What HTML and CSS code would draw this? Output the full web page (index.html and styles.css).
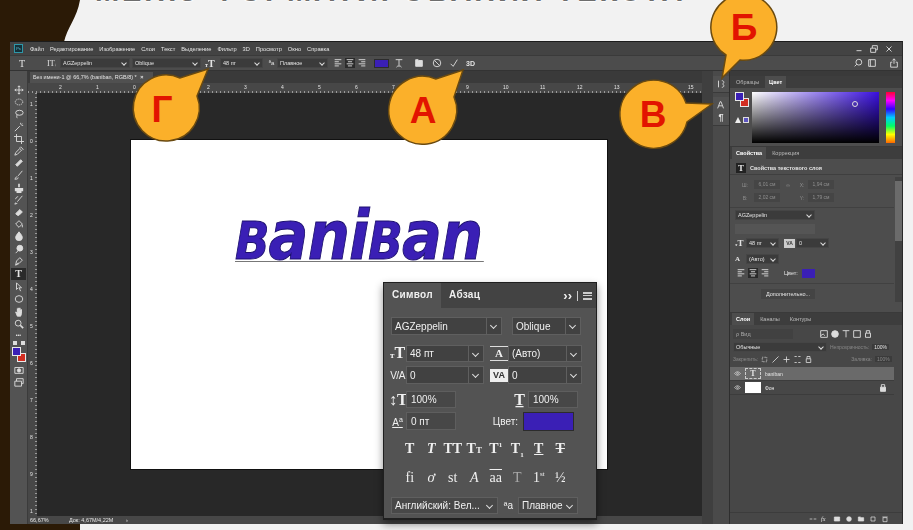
FILE: index.html
```html
<!DOCTYPE html>
<html lang="ru">
<head>
    <meta charset="UTF-8">
    <title>Меню форматирования текста</title>
    <link rel="stylesheet" href="styles.css">
</head>
<body>
<div class="slide">
    <svg class="backdrop" viewBox="0 0 913 530"><path d="M0 0H80C77 18 67 28 64 42V524H80V530H0Z"/></svg>

    <div class="title-strip"><h1 class="title">МЕНЮ ФОРМАТИРОВАНИЯ ТЕКСТА</h1></div>

    <div class="window">
        <div class="menubar">
            <span class="ps-logo">Ps</span>
            <span>Файл</span><span>Редактирование</span><span>Изображение</span><span>Слои</span><span>Текст</span><span>Выделение</span><span>Фильтр</span><span>3D</span><span>Просмотр</span><span>Окно</span><span>Справка</span>
            <div class="win-btns">
                <svg class="ic" viewBox="0 0 12 12"><path d="M3 8h6"/></svg>
                <svg class="ic" viewBox="0 0 12 12"><path d="M2 5h6v5H2zM4 5V2h6v5H8"/></svg>
                <svg class="ic" viewBox="0 0 12 12"><path d="M3 3l6 6M9 3l-6 6"/></svg>
            </div>
        </div>

        <div class="optbar">
            <span class="opt-t">T</span>
            <span class="opt-tt">IT<small>↓</small></span>
            <div class="sel sel-dark w70"><span>AGZeppelin</span></div>
            <div class="sel sel-dark w69"><span>Oblique</span></div>
            <span class="opt-size"><small>т</small>T</span>
            <div class="sel sel-dark w43"><span>48 пт</span></div>
            <span class="opt-aa">ªa</span>
            <div class="sel sel-dark w51"><span>Плавное</span></div>
            <div class="align-group">
                <svg class="ic" viewBox="0 0 12 12"><path d="M2 2h8M2 4.500h5M2 7h8M2 9.500h5"/></svg>
                <svg class="ic ic-on" viewBox="0 0 12 12"><path d="M2 2h8M3.500 4.500h5M2 7h8M3.500 9.500h5"/></svg>
                <svg class="ic" viewBox="0 0 12 12"><path d="M2 2h8M5 4.500h5M2 7h8M5 9.500h5"/></svg>
            </div>
            <span class="opt-swatch"></span>
            <svg class="ic opt-warp" viewBox="0 0 12 12"><path d="M2 2h8M6 2v7M3 11c1-2 5-2 6 0"/></svg>
            <svg class="ic opt-panel" viewBox="0 0 12 12"><path d="M2 2h3l1 1h4v7H2z" fill="#ddd"/></svg>
            <svg class="ic opt-cancel" viewBox="0 0 12 12"><circle cx="6" cy="6" r="4.500"/><path d="M3 3l6 6"/></svg>
            <svg class="ic opt-ok" viewBox="0 0 12 12"><path d="M2 7l3 3 5-8"/></svg>
            <span class="opt-3d">3D</span>
            <div class="opt-right">
                <svg class="ic" viewBox="0 0 12 12"><circle cx="7" cy="5" r="3.500"/><path d="M4.500 7.500L2 10"/></svg>
                <svg class="ic" viewBox="0 0 12 12"><path d="M2 2h8v8H2zM4 2v8"/></svg>
                <svg class="ic opt-share" viewBox="0 0 12 12"><path d="M4 5H2v6h8V5H8M6 7V1M4 3l2-2 2 2"/></svg>
            </div>
        </div>

        <div class="workspace">
            <div class="tools">
                <svg class="ic" viewBox="0 0 12 12"><path d="M6 1v10M1 6h10M4.500 2.500L6 1l1.500 1.500M4.500 9.500L6 11l1.500-1.500M2.500 4.500L1 6l1.500 1.500M9.500 4.500L11 6 9.500 7.500"/></svg>
                <svg class="ic" viewBox="0 0 12 12"><ellipse cx="6" cy="6" rx="4.500" ry="3.500" stroke-dasharray="1.500 1"/></svg>
                <svg class="ic" viewBox="0 0 12 12"><ellipse cx="6.500" cy="4.500" rx="4.500" ry="3"/><path d="M4 7c-1 1-1 3 0 4"/></svg>
                <svg class="ic" viewBox="0 0 12 12"><path d="M1 11l6-6M8 1v2M11 4H9M10 2L9 3"/></svg>
                <svg class="ic" viewBox="0 0 12 12"><path d="M3 0v9h9M0 3h9v9"/></svg>
                <svg class="ic" viewBox="0 0 12 12"><path d="M1 11l1-3 5-5 2 2-5 5zM7 2l1-1 3 3-1 1"/></svg>
                <svg class="ic" viewBox="0 0 12 12"><path d="M2 8l6-6 2 2-6 6z" fill="#ddd"/></svg>
                <svg class="ic" viewBox="0 0 12 12"><path d="M10 1L5 7M4 8c-2 0-2 2-3 3 2 0 4 0 4-2"/></svg>
                <svg class="ic" viewBox="0 0 12 12"><path d="M6 1v4M2 7h8v2H2zM3 11h6" stroke-width="2"/></svg>
                <svg class="ic" viewBox="0 0 12 12"><path d="M10 1L4 8M2 9l-1 2 3-1M2 5c0-2 2-3 3-3"/></svg>
                <svg class="ic" viewBox="0 0 12 12"><path d="M2 8l5-5 3 3-4 4H4z" fill="#ddd"/></svg>
                <svg class="ic" viewBox="0 0 12 12"><path d="M2 6l4-4 4 4-4 4zM10 7v3"/></svg>
                <svg class="ic" viewBox="0 0 12 12"><path d="M6 1c3 4 4 5 4 7a4 3.500 0 0 1-8 0c0-2 1-3 4-7z" fill="#ddd"/></svg>
                <svg class="ic" viewBox="0 0 12 12"><circle cx="7" cy="5" r="3.500" fill="#ddd"/><path d="M5 8l-3 3"/></svg>
                <svg class="ic" viewBox="0 0 12 12"><path d="M2 11l1-5 4-4 3 3-4 4zM2 11l3-3"/></svg>
                <span class="tool-t">T</span>
                <svg class="ic" viewBox="0 0 12 12"><path d="M3 1l6 6-3 0 2 4M3 1v8l2-2"/></svg>
                <svg class="ic" viewBox="0 0 12 12"><ellipse cx="6" cy="6" rx="4.500" ry="4"/></svg>
                <svg class="ic" viewBox="0 0 12 12"><path d="M4 11L2 6l2 1V2l1 3V1l1 4 1-4 1 4 1-2v5l-1 3z" fill="#ddd"/></svg>
                <svg class="ic" viewBox="0 0 12 12"><circle cx="5" cy="5" r="3.500"/><path d="M7.500 7.500L11 11" stroke-width="2"/></svg>
                <span class="tool-dots">•••</span>
                <div class="tool-mini"><i></i><b></b></div>
                <div class="tool-colors"><span class="c-bg"></span><span class="c-fg"></span></div>
                <svg class="ic" viewBox="0 0 12 12"><path d="M1 3h10v7H1z"/><circle cx="6" cy="6.500" r="2" fill="#ddd"/></svg>
                <svg class="ic" viewBox="0 0 12 12"><path d="M1 5h8v6H1zM3 5V2h8v6H9"/></svg>
            </div>

            <div class="doc-area">
                <div class="doc-tabs"><div class="doc-tab">Без имени-1 @ 66,7% (baniban, RGB/8) * <b>×</b></div></div>
                <div class="ruler-top">
                    <span>2</span><span>1</span><span>0</span><span>1</span><span>2</span><span>3</span><span>4</span><span>5</span><span>6</span><span>7</span><span>8</span><span>9</span><span>10</span><span>11</span><span>12</span><span>13</span><span>14</span><span>15</span>
                </div>
                <div class="doc-row">
                    <div class="ruler-left">
                        <span>1</span><span>0</span><span>1</span><span>2</span><span>3</span><span>4</span><span>5</span><span>6</span><span>7</span><span>8</span><span>9</span><span>1</span>
                    </div>
                    <div class="canvas">
                        <div class="page">
                            <div class="logo">
                                <span class="logo-cap">b</span><span>an</span><span>i</span><span class="logo-cap">b</span><span>an</span>
                            </div>
                        </div>
                    </div>
                </div>
                <div class="status"><span>66,67%</span><span>Док: 4,67M/4,22M</span><span>›</span></div>
            </div>

            <div class="dock-gap"></div>

            <div class="dock">
                <div class="dock-group dock-first">
                    <svg class="ic" viewBox="0 0 12 12"><path d="M3 2v8M7 2c3 0 3 3 1 4 2 1 2 4-1 4"/></svg>
                </div>
                <div class="dock-group">
                    <svg class="ic" viewBox="0 0 12 12"><path d="M2 10l3-8h1l3 8M3.500 7h4"/></svg>
                    <span class="dock-para">¶</span>
                </div>
            </div>

            <div class="panels">
                <div class="panel panel-color">
                    <div class="panel-tabs">
                        <span>Образцы</span><span class="on">Цвет</span>
                    </div>
                    <div class="color-body">
                        <div class="color-side">
                            <div class="color-chips"><span class="c-bg"></span><span class="c-fg"></span></div>
                            <div class="color-warn"><i></i><b></b></div>
                        </div>
                        <div class="color-field"><span class="color-pick"></span></div>
                        <div class="hue"></div>
                    </div>
                </div>

                <div class="panel panel-props">
                    <div class="panel-tabs">
                        <span class="on">Свойства</span><span>Коррекция</span>
                    </div>
                    <div class="props-head"><span class="props-t">T</span>Свойства текстового слоя</div>
                    <div class="props-scroll"><i></i></div>
                    <div class="props-grid">
                        <span>Ш:</span><em>6,01 см</em><span class="props-link">∞</span><span>X:</span><em>1,94 см</em>
                        <span>В:</span><em>2,02 см</em><span></span><span>Y:</span><em>1,79 см</em>
                    </div>
                    <div class="props-sep"></div>
                    <div class="sel sel-dark props-font"><span>AGZeppelin</span></div>
                    <div class="props-blank"></div>
                    <div class="props-size">
                        <span class="prop-ico"><small>т</small>T</span>
                        <div class="sel sel-dark w33"><span>48 пт</span></div>
                        <span class="prop-va">VA</span>
                        <div class="sel sel-dark w33"><span>0</span></div>
                    </div>
                    <div class="props-size">
                        <span class="prop-ico prop-lead">A</span>
                        <div class="sel sel-dark w33"><span>(Авто)</span></div>
                    </div>
                    <div class="props-align">
                        <svg class="ic" viewBox="0 0 12 12"><path d="M2 2h8M2 4.500h5M2 7h8M2 9.500h5"/></svg>
                        <svg class="ic ic-on" viewBox="0 0 12 12"><path d="M2 2h8M3.500 4.500h5M2 7h8M3.500 9.500h5"/></svg>
                        <svg class="ic" viewBox="0 0 12 12"><path d="M2 2h8M5 4.500h5M2 7h8M5 9.500h5"/></svg>
                        <span class="props-colorlabel">Цвет:</span>
                        <span class="props-swatch"></span>
                    </div>
                    <div class="props-sep props-sep-low"></div>
                    <div class="props-more">Дополнительно...</div>
                </div>

                <div class="panel panel-layers">
                    <div class="panel-tabs">
                        <span class="on">Слои</span><span>Каналы</span><span>Контуры</span>
                    </div>
                    <div class="layers-filter">
                        <span class="layers-kind">ρ Вид</span>
                        <div class="layers-icons">
                            <svg class="ic" viewBox="0 0 12 12"><path d="M2 2h8v8H2zM2 8l3-2 2 2"/></svg>
                            <svg class="ic" viewBox="0 0 12 12"><circle cx="6" cy="6" r="4" fill="#ddd"/></svg>
                            <svg class="ic" viewBox="0 0 12 12"><path d="M2 2h8M6 2v8"/></svg>
                            <svg class="ic" viewBox="0 0 12 12"><path d="M2 2h8v8H2z"/></svg>
                            <svg class="ic" viewBox="0 0 12 12"><path d="M3 5h6v5H3zM4 5V2h4v3"/></svg>
                        </div>
                    </div>
                    <div class="layers-blend">
                        <div class="sel sel-dark blend-mode"><span>Обычные</span></div>
                        <span class="dim">Непрозрачность:</span>
                        <span class="percent">100%</span>
                    </div>
                    <div class="layers-lock">
                        <span class="dim">Закрепить:</span>
                        <svg class="ic" viewBox="0 0 12 12"><path d="M3 3h6v6H3z" stroke-dasharray="1 1"/></svg>
                        <svg class="ic" viewBox="0 0 12 12"><path d="M10 2L4 8M2 10l2-2"/></svg>
                        <svg class="ic" viewBox="0 0 12 12"><path d="M6 2v8M2 6h8"/></svg>
                        <svg class="ic" viewBox="0 0 12 12"><path d="M2 2h3M7 2h3M2 10h3M7 10h3"/></svg>
                        <svg class="ic" viewBox="0 0 12 12"><path d="M3 5h6v5H3zM4 5V2h4v3"/></svg>
                        <span class="dim layers-fill">Заливка:</span>
                        <span class="percent dim">100%</span>
                    </div>
                    <div class="layer layer-on">
                        <svg class="eye" viewBox="0 0 12 8"><path d="M1 4c3-4 7-4 10 0-3 4-7 4-10 0z"/><circle cx="6" cy="4" r="1.500"/></svg>
                        <span class="thumb thumb-t">T</span>
                        <span>baniban</span>
                    </div>
                    <div class="layer">
                        <svg class="eye" viewBox="0 0 12 8"><path d="M1 4c3-4 7-4 10 0-3 4-7 4-10 0z"/><circle cx="6" cy="4" r="1.500"/></svg>
                        <span class="thumb"></span>
                        <span>Фон</span>
                        <svg class="ic layer-lock" viewBox="0 0 12 12"><path d="M3 5h6v5H3z" fill="#ddd"/><path d="M4 5V2h4v3"/></svg>
                    </div>
                    <div class="layers-foot">
                        <svg class="ic" viewBox="0 0 12 12"><path d="M1 6h4M7 6h4"/></svg>
                        <span class="foot-fx">fx</span>
                        <svg class="ic" viewBox="0 0 12 12"><path d="M2 3h8v6H2z" fill="#ddd"/></svg>
                        <svg class="ic" viewBox="0 0 12 12"><circle cx="6" cy="6" r="3.500" fill="#ddd"/></svg>
                        <svg class="ic" viewBox="0 0 12 12"><path d="M2 3h3l1 1h4v5H2z" fill="#ddd"/></svg>
                        <svg class="ic" viewBox="0 0 12 12"><path d="M3 3h6v6H3z"/></svg>
                        <svg class="ic" viewBox="0 0 12 12"><path d="M3 4h6v6H3zM2 3h8"/></svg>
                    </div>
                </div>
            </div>
        </div>
    </div>

    <div class="char-panel">
        <div class="char-tabs">
            <span class="on">Символ</span><span>Абзац</span>
            <div class="char-menu"><b>››</b><i></i><u></u></div>
        </div>
        <div class="char-row char-r1">
            <div class="sel w111"><span>AGZeppelin</span></div>
            <div class="sel w69 ml10"><span>Oblique</span></div>
        </div>
        <div class="char-row char-r2">
            <span class="char-ico"><small>т</small>T</span>
            <div class="sel w78"><span>48 пт</span></div>
            <span class="char-ico ml6 char-lead">A</span>
            <div class="sel w74"><span>(Авто)</span></div>
        </div>
        <div class="char-row char-r3">
            <span class="char-ico char-va">V/A</span>
            <div class="sel w78"><span>0</span></div>
            <span class="char-ico ml6 char-vabox">VA</span>
            <div class="sel w74"><span>0</span></div>
        </div>
        <div class="char-row char-r4">
            <span class="char-ico">↕T</span>
            <div class="inp"><span>100%</span></div>
            <span class="char-ico char-gap">T̲</span>
            <div class="inp"><span>100%</span></div>
        </div>
        <div class="char-row char-r5">
            <span class="char-ico char-base">A<sup>a</sup></span>
            <div class="inp"><span>0 пт</span></div>
            <span class="char-color-label">Цвет:</span>
            <span class="char-swatch"></span>
        </div>
        <div class="glyphs glyphs-style">
            <span class="g-bold">T</span><span class="g-it">T</span><span>TT</span><span>T<small>T</small></span><span>T<sup>1</sup></span><span>T<sub>1</sub></span><span class="g-under">T</span><span class="g-strike">T</span>
        </div>
        <div class="glyphs glyphs-open">
            <span>fi</span><span class="g-it">ơ</span><span>st</span><span class="g-it">A</span><span class="g-over">aa</span><span class="g-dim">T</span><span>1<sup>st</sup></span><span>½</span>
        </div>
        <div class="char-row char-r8">
            <div class="sel w107 sel-flat"><span>Английский: Вел...</span></div>
            <span class="char-aa">ªa</span>
            <div class="sel w60 sel-flat"><span>Плавное</span></div>
        </div>
    </div>

    <svg class="callouts" viewBox="0 0 913 530">
        <path class="bubble" d="M197 96A33 33 0 1 1 180 78L208 69Z"/>
        <path class="bubble" d="M454 97A34 34 0 1 1 436 79L463 70Z"/>
        <path class="bubble" d="M726 55A33 33 0 1 1 740 60L722 78Z"/>
        <path class="bubble" d="M687 122A34 34 0 1 1 686 103L712 104Z"/>
        <text class="bubble-letter" x="162" y="122">Г</text>
        <text class="bubble-letter" x="423" y="123">А</text>
        <text class="bubble-letter" x="744" y="40">Б</text>
        <text class="bubble-letter" x="653" y="127">В</text>
    </svg>
</div>
</body>
</html>
```

FILE: styles.css
```css
* {
    box-sizing: border-box;
}
body {
    margin: 0;
    background-color: #f2f2f2;
    font-family: "Liberation Sans", Arial, sans-serif;
}
.slide {
    position: relative;
    width: 913px;
    height: 530px;
    overflow: hidden;
}
.backdrop {
    position: absolute;
    left: 0;
    top: 0;
    width: 913px;
    height: 530px;
    fill: #2b1a06;
}
.title-strip {
    position: relative;
    height: 41px;
    overflow: hidden;
    padding-left: 95px;
}
.title {
    margin: -23px 0 0;
    font-size: 29px;
    line-height: 29px;
    letter-spacing: 2.9px;
    font-weight: bold;
    color: #6e6e6e;
    text-shadow: 0 1px 1px #fff;
    white-space: nowrap;
}

/* photoshop window */
.window {
    position: relative;
    display: flex;
    flex-direction: column;
    width: 893px;
    height: 483px;
    margin-left: 10px;
    background-color: #4d4d4d;
    border-top: 1px solid #1c1c1c;
    border-right: 1px solid #2a2a2a;
    color: #e4e4e4;
    font-size: 6px;
    filter: blur(0.35px);
}
.ic {
    width: 10px;
    height: 10px;
    flex: none;
    fill: none;
    stroke: #dcdcdc;
    stroke-width: 1.1;
}
.ic-on {
    background-color: #2a2a2a;
}
.menubar {
    display: flex;
    align-items: center;
    gap: 6px;
    height: 13px;
    padding-left: 4px;
    background-color: #434343;
    font-size: 5.700px;
    white-space: nowrap;
}
.ps-logo {
    width: 9px;
    height: 9px;
    margin-right: 1px;
    background-color: #15313a;
    border: 1px solid #2e97a8;
    color: #5fc7d8;
    font-size: 4px;
    line-height: 7px;
    text-align: center;
}
.win-btns {
    display: flex;
    gap: 5px;
    margin-left: auto;
    padding-right: 8px;
}
.optbar {
    display: flex;
    align-items: center;
    height: 16px;
    padding-left: 9px;
    background-color: #4c4c4c;
    border-top: 1px solid #3a3a3a;
    border-bottom: 1px solid #333;
    white-space: nowrap;
}
.opt-t {
    width: 28px;
    font-family: "Liberation Serif", serif;
    font-size: 10px;
}
.opt-tt {
    width: 13px;
    font-family: "Liberation Serif", serif;
    font-size: 8px;
}
.opt-tt small {
    font-size: 4px;
}
.opt-size {
    width: 15px;
    margin-left: 2px;
    font-family: "Liberation Serif", serif;
    font-size: 10px;
    font-weight: bold;
}
.opt-size small {
    font-size: 6px;
}
.opt-aa {
    width: 11px;
    margin-left: 1px;
    text-align: center;
    font-size: 6px;
}

/* selects and inputs share one look, sizes are set with the wNN helpers */
.sel {
    position: relative;
    display: flex;
    align-items: center;
    height: 100%;
    padding-left: 3px;
    background-color: #414141;
    border: 1px solid #5f5f5f;
    white-space: nowrap;
    overflow: hidden;
}
.sel::after {
    content: "";
    position: absolute;
    right: 5px;
    top: 50%;
    width: 4px;
    height: 4px;
    margin-top: -3px;
    border-right: 1px solid #ddd;
    border-bottom: 1px solid #ddd;
    transform: rotate(45deg);
}
.char-row .sel::before {
    content: "";
    position: absolute;
    right: 14px;
    top: 0;
    bottom: 0;
    width: 1px;
    background-color: #5f5f5f;
}
.char-row .sel-flat::before {
    display: none;
}
.sel-dark {
    height: 10px;
    margin-right: 2px;
    padding-left: 2px;
    background-color: #3b3b3b;
    border-color: #454545;
    font-size: 5.500px;
}
.sel-dark::after {
    right: 3px;
    width: 3px;
    height: 3px;
    margin-top: -2px;
}
.w33 { width: 33px; }
.w43 { width: 43px; }
.w51 { width: 51px; }
.w60 { width: 60px; }
.w69 { width: 69px; }
.w70 { width: 70px; }
.w74 { width: 74px; }
.w78 { width: 78px; }
.w107 { width: 107px; }
.w111 { width: 111px; }
.ml6 { margin-left: 6px; }
.ml10 { margin-left: 10px; }

.align-group {
    display: flex;
    gap: 2px;
    margin-left: 3px;
}
.opt-swatch {
    width: 15px;
    height: 9px;
    margin-left: 7px;
    background-color: #3a1fb5;
    border: 1px solid #2c2c2c;
}
.opt-warp { margin-left: 5px; }
.opt-panel { margin-left: 10px; }
.opt-cancel { margin-left: 8px; }
.opt-ok { margin-left: 7px; }
.opt-3d {
    margin-left: 7px;
    font-size: 7px;
    font-weight: bold;
}
.opt-right {
    display: flex;
    gap: 4px;
    margin-left: auto;
    padding-right: 3px;
}
.opt-share { margin-left: 8px; }

.workspace {
    flex: 1;
    display: flex;
    min-height: 0;
}

/* tools column */
.tools {
    display: flex;
    flex-direction: column;
    align-items: center;
    justify-content: space-between;
    flex: none;
    width: 18px;
    padding: 14px 0 137px;
    background-color: #535353;
    border-right: 1px solid #3b3b3b;
}
.tool-t {
    width: 15px;
    height: 12px;
    background-color: #2a2a2a;
    font-family: "Liberation Serif", serif;
    font-size: 10px;
    font-weight: bold;
    line-height: 12px;
    text-align: center;
}
.tool-dots {
    font-size: 5px;
    line-height: 8px;
}
.tool-mini {
    display: flex;
    gap: 4px;
    height: 4px;
}
.tool-mini i,
.tool-mini b {
    width: 4px;
    height: 4px;
    background-color: #ddd;
}
.tool-colors,
.color-chips {
    position: relative;
    flex: none;
    width: 14px;
    height: 15px;
}
.c-fg,
.c-bg {
    position: absolute;
    width: 9px;
    height: 9px;
    border: 1px solid #e8e8e8;
}
.c-fg {
    left: 0;
    top: 0;
    background-color: #3a1fb5;
}
.c-bg {
    right: 0;
    bottom: 0;
    background-color: #d22d20;
}

/* document */
.doc-area {
    flex: none;
    display: flex;
    flex-direction: column;
    width: 674px;
    background-color: #3f3f3f;
}
.doc-tabs {
    height: 12px;
    padding: 1px 0 0 2px;
    background-color: #3a3a3a;
}
.doc-tab {
    width: 123px;
    height: 11px;
    padding-left: 3px;
    background-color: #505050;
    font-size: 5.500px;
    line-height: 10px;
    white-space: nowrap;
}
.doc-tab b {
    margin-left: 2px;
}
.ruler-top {
    display: flex;
    flex: none;
    height: 10px;
    padding-left: 31px;
    background-color: #474747;
    background-image: repeating-linear-gradient(90deg, #9a9a9a 0 1px, transparent 1px 4px);
    background-size: 100% 2px;
    background-repeat: no-repeat;
    background-position: 0 100%;
    font-size: 5px;
    line-height: 8px;
}
.ruler-top span {
    flex: none;
    width: 37px;
}
.doc-row {
    flex: 1;
    display: flex;
    min-height: 0;
}
.ruler-left {
    display: flex;
    flex-direction: column;
    flex: none;
    width: 9px;
    padding: 8px 0 0 2px;
    background-color: #474747;
    background-image: repeating-linear-gradient(180deg, #9a9a9a 0 1px, transparent 1px 4px);
    background-size: 2px 100%;
    background-repeat: no-repeat;
    background-position: 100% 0;
    font-size: 5px;
    overflow: hidden;
}
.ruler-left span {
    flex: none;
    height: 37px;
}
.canvas {
    flex: 1;
    padding: 47px 0 0 94px;
    background-color: #282828;
}
.page {
    width: 476px;
    height: 329px;
    padding-top: 70px;
    background-color: #fff;
    box-shadow: 0 0 0 1px #111;
}
.logo {
    display: flex;
    align-items: baseline;
    width: 286px;
    height: 52px;
    margin-left: 104px;
    border-bottom: 1px solid #777;
    color: #3a1fb5;
    font-family: "DejaVu Sans", sans-serif;
    font-size: 68px;
    font-style: italic;
    font-weight: bold;
    line-height: 52px;
    letter-spacing: -1px;
    -webkit-text-stroke: 1px #1d1070;
    white-space: nowrap;
    transform: scaleX(0.87);
    transform-origin: 0 0;
}
.logo-cap {
    font-size: 52px;
    text-transform: uppercase;
}
.status {
    display: flex;
    flex: none;
    height: 8px;
    padding-left: 2px;
    background-color: #474747;
    font-size: 5.500px;
    line-height: 8px;
}
.status span:nth-child(1) { width: 39px; }
.status span:nth-child(2) { width: 57px; }

/* dock */
.dock-gap {
    flex: none;
    width: 11px;
    background-color: #3f3f3f;
}
.dock {
    flex: none;
    width: 17px;
    padding-top: 5px;
    background-color: #4a4a4a;
    border-right: 1px solid #2e2e2e;
}
.dock-group {
    display: flex;
    flex-direction: column;
    align-items: center;
    gap: 2px;
    padding: 3px 0;
    background-color: #515151;
    border-bottom: 1px solid #3a3a3a;
}
.dock-first {
    margin-bottom: 4px;
}
.dock-para {
    font-size: 9px;
    font-weight: bold;
    line-height: 10px;
}

/* right panels */
.panels {
    flex: none;
    display: flex;
    flex-direction: column;
    width: 172px;
    padding-top: 5px;
    background-color: #3a3a3a;
}
.panel {
    position: relative;
    flex: none;
    background-color: #4d4d4d;
}
.panel-tabs {
    display: flex;
    height: 12px;
    padding-left: 2px;
    gap: 2px;
    background-color: #3d3d3d;
    font-size: 5.500px;
    line-height: 12px;
}
.panel-tabs span {
    padding: 0 4px;
    color: #bdbdbd;
}
.panel-tabs .on {
    background-color: #4d4d4d;
    color: #fff;
    font-weight: bold;
}
.panel-color {
    height: 70px;
}
.color-body {
    display: flex;
    padding: 4px 0 0 5px;
}
.color-side {
    flex: none;
    width: 17px;
}
.color-warn {
    display: flex;
    gap: 2px;
    margin-top: 10px;
}
.color-warn i {
    width: 6px;
    height: 6px;
    background-color: #eee;
    clip-path: polygon(50% 0, 100% 100%, 0 100%);
}
.color-warn b {
    width: 6px;
    height: 6px;
    background-color: #5c55c0;
    border: 1px solid #ddd;
}
.color-field {
    position: relative;
    flex: none;
    width: 127px;
    height: 51px;
    background-image: linear-gradient(to bottom, transparent, #000), linear-gradient(to right, #fff, #3a10e0);
}
.color-pick {
    position: absolute;
    left: 100px;
    top: 9px;
    width: 6px;
    height: 6px;
    border: 1px solid #ddd;
    border-radius: 50%;
}
.hue {
    flex: none;
    width: 9px;
    height: 51px;
    margin-left: 7px;
    background-image: linear-gradient(to bottom, #f03, #f0f, #30f, #0cf, #0f6, #ff0, #f60);
}
.panel-props {
    height: 165px;
    margin-top: 1px;
}
.props-head {
    display: flex;
    align-items: center;
    gap: 4px;
    height: 14px;
    margin-top: 2px;
    padding-left: 6px;
    border-bottom: 1px solid #3f3f3f;
    font-size: 5.500px;
    font-weight: bold;
}
.props-t {
    width: 10px;
    height: 10px;
    background-color: #222;
    font-family: "Liberation Serif", serif;
    font-size: 9px;
    line-height: 10px;
    text-align: center;
}
.props-scroll {
    position: absolute;
    right: 0;
    top: 30px;
    width: 7px;
    height: 125px;
    background-color: #414141;
}
.props-scroll i {
    display: block;
    height: 60px;
    margin-top: 4px;
    background-color: #6b6b6b;
}
.props-grid {
    display: grid;
    grid-template-columns: 18px 26px 16px 12px 26px;
    grid-auto-rows: 13px;
    align-items: center;
    padding: 3px 0 0 6px;
    color: #8f8f8f;
    font-size: 5px;
    text-align: center;
}
.props-grid em {
    height: 9px;
    background-color: #454545;
    font-style: normal;
    line-height: 9px;
}
.props-sep {
    height: 1px;
    margin: 3px 8px 0 0;
    background-color: #414141;
}
.props-sep-low {
    margin-top: 5px;
}
.props-font {
    width: 80px;
    margin: 2px 0 0 5px;
}
.props-blank {
    width: 80px;
    height: 10px;
    margin: 4px 0 0 5px;
    background-color: #555;
}
.props-size {
    display: flex;
    align-items: center;
    height: 10px;
    margin-top: 4px;
    padding-left: 5px;
}
.props-size + .props-size {
    margin-top: 6px;
}
.prop-ico {
    width: 11px;
    font-family: "Liberation Serif", serif;
    font-size: 9px;
    font-weight: bold;
}
.prop-ico small {
    font-size: 5px;
}
.prop-lead {
    font-size: 7px;
}
.prop-va {
    width: 11px;
    height: 9px;
    margin: 0 1px 0 3px;
    background-color: #ccc;
    color: #333;
    font-size: 5px;
    font-weight: bold;
    line-height: 9px;
    text-align: center;
}
.props-align {
    display: flex;
    align-items: center;
    gap: 2px;
    margin-top: 4px;
    padding-left: 6px;
}
.props-colorlabel {
    margin-left: 12px;
    font-size: 5.500px;
}
.props-swatch {
    width: 13px;
    height: 9px;
    margin-left: 2px;
    background-color: #3a1fb5;
}
.props-more {
    width: 54px;
    height: 10px;
    margin: 5px 0 0 31px;
    background-color: #444;
    font-size: 5.500px;
    line-height: 10px;
    text-align: center;
}
.panel-layers {
    flex: 1;
    display: flex;
    flex-direction: column;
    margin-top: 1px;
    background-color: #474747;
}
.layers-filter {
    display: flex;
    align-items: center;
    height: 14px;
    margin-top: 2px;
    padding-left: 3px;
}
.layers-kind {
    width: 60px;
    height: 10px;
    padding-left: 3px;
    background-color: #414141;
    color: #aaa;
    font-size: 5.500px;
    line-height: 10px;
}
.layers-icons {
    display: flex;
    gap: 1px;
    margin-left: 26px;
}
.layers-blend,
.layers-lock {
    display: flex;
    align-items: center;
    gap: 2px;
    height: 12px;
    padding-left: 3px;
    font-size: 5px;
}
.blend-mode {
    width: 94px;
    margin-right: 1px;
}
.dim {
    color: #888;
}
.percent {
    margin-left: 1px;
    padding: 0 2px;
    background-color: #3b3b3b;
}
.layers-lock .ic {
    width: 9px;
    height: 9px;
}
.layers-fill {
    margin-left: 36px;
}
.layer {
    display: flex;
    align-items: center;
    gap: 4px;
    height: 14px;
    margin-right: 8px;
    padding-left: 4px;
    border-bottom: 1px solid #3c3c3c;
    font-size: 5px;
}
.layer-on {
    margin-top: 2px;
    background-color: #6a6a6a;
}
.eye {
    width: 7px;
    height: 5px;
    fill: none;
    stroke: #eee;
}
.thumb {
    width: 16px;
    height: 11px;
    background-color: #fff;
}
.thumb-t {
    background-color: transparent;
    border: 1px dashed #ccc;
    font-family: "Liberation Serif", serif;
    font-size: 8px;
    font-weight: bold;
    line-height: 9px;
    text-align: center;
}
.layer-lock {
    margin-left: auto;
    margin-right: 6px;
}
.layers-foot {
    display: flex;
    justify-content: flex-end;
    align-items: center;
    gap: 4px;
    flex: none;
    height: 12px;
    margin-top: auto;
    padding-right: 13px;
    border-top: 1px solid #3c3c3c;
}
.layers-foot .ic {
    width: 8px;
    height: 8px;
}
.foot-fx {
    width: 8px;
    font-family: "Liberation Serif", serif;
    font-size: 6px;
    font-style: italic;
}

/* floating character panel */
.char-panel {
    position: absolute;
    left: 383px;
    top: 282px;
    width: 214px;
    height: 238px;
    background-color: #535353;
    border: 1px solid #1f1f1f;
    border-bottom-width: 2px;
    box-shadow: 0 4px 8px rgba(0, 0, 0, 0.45);
    color: #f0f0f0;
    font-size: 10px;
    filter: blur(0.3px);
}
.char-tabs {
    display: flex;
    height: 25px;
    background-color: #434343;
    font-size: 10px;
    line-height: 24px;
}
.char-tabs > span {
    width: 47px;
    padding-left: 8px;
    font-weight: bold;
    letter-spacing: 0.3px;
}
.char-tabs .on {
    width: 57px;
    padding-left: 8px;
    background-color: #535353;
}
.char-menu {
    display: flex;
    align-items: center;
    gap: 5px;
    margin-left: auto;
    padding-right: 4px;
}
.char-menu b {
    font-size: 13px;
}
.char-menu i {
    width: 1px;
    height: 10px;
    background-color: #ccc;
}
.char-menu u {
    width: 9px;
    height: 8px;
    border-top: 2px solid #ccc;
    border-bottom: 2px solid #ccc;
    background: linear-gradient(#ccc, #ccc) center / 100% 1px no-repeat;
}
.char-row {
    display: flex;
    align-items: center;
    padding-left: 5px;
}
.char-row .sel::after {
    right: 5px;
}
.char-r1 {
    height: 18px;
    margin-top: 9px;
    padding-left: 7px;
}
.char-r2 {
    height: 17px;
    margin-top: 10px;
}
.char-r3 {
    height: 18px;
    margin-top: 4px;
}
.char-r4 {
    height: 17px;
    margin-top: 7px;
}
.char-r5 {
    height: 18px;
    margin-top: 4px;
}
.char-r8 {
    height: 17px;
    margin-top: 11px;
    padding-left: 7px;
}
.char-ico {
    flex: none;
    width: 17px;
    font-family: "Liberation Serif", serif;
    font-size: 16px;
    font-weight: bold;
    line-height: 17px;
    text-align: center;
    white-space: nowrap;
}
.char-ico small {
    font-size: 9px;
}
.char-lead {
    width: 18px;
    font-size: 11px;
    border-top: 1px solid #ddd;
    border-bottom: 1px solid #ddd;
    line-height: 13px;
}
.char-va {
    font-family: "Liberation Sans", sans-serif;
    font-size: 10px;
    font-weight: normal;
    letter-spacing: -0.5px;
}
.char-vabox {
    width: 18px;
    height: 13px;
    background-color: #eee;
    color: #333;
    font-family: "Liberation Sans", sans-serif;
    font-size: 9px;
    line-height: 13px;
}
.char-gap {
    margin-left: 55px;
}
.char-base {
    font-family: "Liberation Sans", sans-serif;
    font-size: 10px;
    font-weight: normal;
    text-decoration: underline;
}
.char-base sup {
    font-size: 7px;
}
.inp {
    display: flex;
    align-items: center;
    flex: none;
    width: 50px;
    height: 100%;
    padding-left: 4px;
    background-color: #474747;
    border: 1px solid #5e5e5e;
}
.char-color-label {
    width: 67px;
    padding-right: 5px;
    font-size: 10px;
    text-align: right;
}
.char-swatch {
    flex: none;
    width: 51px;
    height: 19px;
    background-color: #3a1fb5;
    border: 1px solid #2c2c2c;
}
.glyphs {
    display: grid;
    grid-template-columns: repeat(8, 21.500px);
    height: 16px;
    padding-left: 15px;
    font-family: "Liberation Serif", serif;
    font-size: 14px;
    font-weight: bold;
    line-height: 16px;
    text-align: center;
    white-space: nowrap;
}
.glyphs small {
    font-size: 9px;
}
.glyphs sup,
.glyphs sub {
    font-size: 7px;
    line-height: 0;
}
.glyphs-style {
    margin-top: 11px;
}
.glyphs-open {
    margin-top: 13px;
    font-weight: normal;
}
.g-it { font-style: italic; }
.g-under { text-decoration: underline; }
.g-strike { text-decoration: line-through; }
.g-over { text-decoration: overline; }
.g-dim { color: #aaa; }
.sel-flat {
    background-color: #484848;
    font-size: 10px;
}
.char-aa {
    width: 17px;
    margin-left: 2px;
    margin-right: 1px;
    font-size: 10px;
    text-align: center;
}

/* orange callouts */
.callouts {
    position: absolute;
    left: 0;
    top: 0;
    width: 913px;
    height: 530px;
}
.bubble {
    fill: #fbb02a;
    stroke: #6a4a10;
    stroke-width: 1.5;
}
.bubble-letter {
    fill: #e21400;
    font-family: "Liberation Sans", sans-serif;
    font-size: 37px;
    font-weight: bold;
    text-anchor: middle;
}
```
